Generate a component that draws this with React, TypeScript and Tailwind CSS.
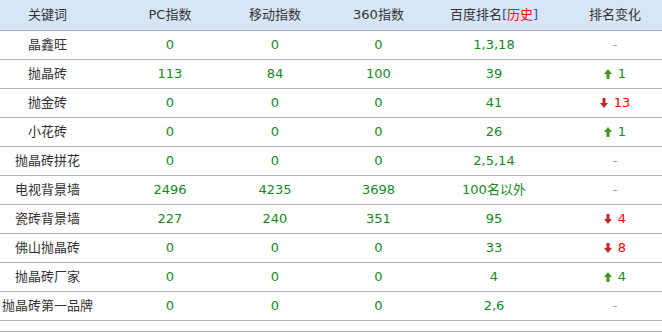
import React from "react";

type Row = {
  kw: string;
  pc: string;
  mobile: string;
  s360: string;
  rank: string;
  change: { dir: "up" | "down"; n: number } | null;
};

const rows: Row[] = [
  { kw: "晶鑫旺", pc: "0", mobile: "0", s360: "0", rank: "1,3,18", change: null },
  { kw: "抛晶砖", pc: "113", mobile: "84", s360: "100", rank: "39", change: { dir: "up", n: 1 } },
  { kw: "抛金砖", pc: "0", mobile: "0", s360: "0", rank: "41", change: { dir: "down", n: 13 } },
  { kw: "小花砖", pc: "0", mobile: "0", s360: "0", rank: "26", change: { dir: "up", n: 1 } },
  { kw: "抛晶砖拼花", pc: "0", mobile: "0", s360: "0", rank: "2,5,14", change: null },
  { kw: "电视背景墙", pc: "2496", mobile: "4235", s360: "3698", rank: "100名以外", change: null },
  { kw: "瓷砖背景墙", pc: "227", mobile: "240", s360: "351", rank: "95", change: { dir: "down", n: 4 } },
  { kw: "佛山抛晶砖", pc: "0", mobile: "0", s360: "0", rank: "33", change: { dir: "down", n: 8 } },
  { kw: "抛晶砖厂家", pc: "0", mobile: "0", s360: "0", rank: "4", change: { dir: "up", n: 4 } },
  { kw: "抛晶砖第一品牌", pc: "0", mobile: "0", s360: "0", rank: "2,6", change: null },
];

const grid = "grid grid-cols-[95px_125px_105px_105px_118px_114px]";

function Arrow({ dir }: { dir: "up" | "down" }) {
  const up = dir === "up";
  return (
    <svg width="8" height="10" viewBox="0 0 8 10" className={up ? "" : "rotate-180"}>
      <path d="M4 0 L8 5 L5.5 5 L5.5 10 L2.5 10 L2.5 5 L0 5 Z" fill={up ? "#3f9a1c" : "#c0262c"} />
    </svg>
  );
}

export default function App() {
  return (
    <div
      className="w-[662px] h-[332px] bg-white text-[13px] text-[#333] overflow-hidden"
      style={{ fontFamily: '"DejaVu Sans", Verdana, "Noto Sans CJK SC", sans-serif' }}
    >
      <div className={`${grid} h-[31px] bg-[#d7e6f7] border-b border-[#adb3ba] items-center text-center`}>
        <div>关键词</div>
        <div className="pl-[25px]">PC指数</div>
        <div className="pl-[5px]">移动指数</div>
        <div className="pl-[2px]">360指数</div>
        <div className="pl-[10px]">
          百度排名<span className="text-[#2255aa]">[</span>
          <span className="text-[#ff0000]">历史</span>
          <span className="text-[#2255aa]">]</span>
        </div>
        <div className="pl-[20px]">排名变化</div>
      </div>
      {rows.map((r) => (
        <div key={r.kw} className={`${grid} h-[29px] border-b border-[#b5b5b5] items-center text-center`}>
          <div className="whitespace-nowrap">{r.kw}</div>
          <div className="pl-[25px] text-[#118a1e]">{r.pc}</div>
          <div className="pl-[5px] text-[#118a1e]">{r.mobile}</div>
          <div className="pl-[2px] text-[#118a1e]">{r.s360}</div>
          <div className="pl-[10px] text-[#118a1e]">{r.rank}</div>
          <div className="pl-[20px] flex justify-center items-center gap-[6px]">
            {r.change ? (
              <>
                <Arrow dir={r.change.dir} />
                <span className={r.change.dir === "up" ? "text-[#118a1e]" : "text-[#ff0000]"}>{r.change.n}</span>
              </>
            ) : (
              <span className="text-[#999]">-</span>
            )}
          </div>
        </div>
      ))}
      <div className="h-[11px] border-b border-[#b5b5b5]" />
    </div>
  );
}
